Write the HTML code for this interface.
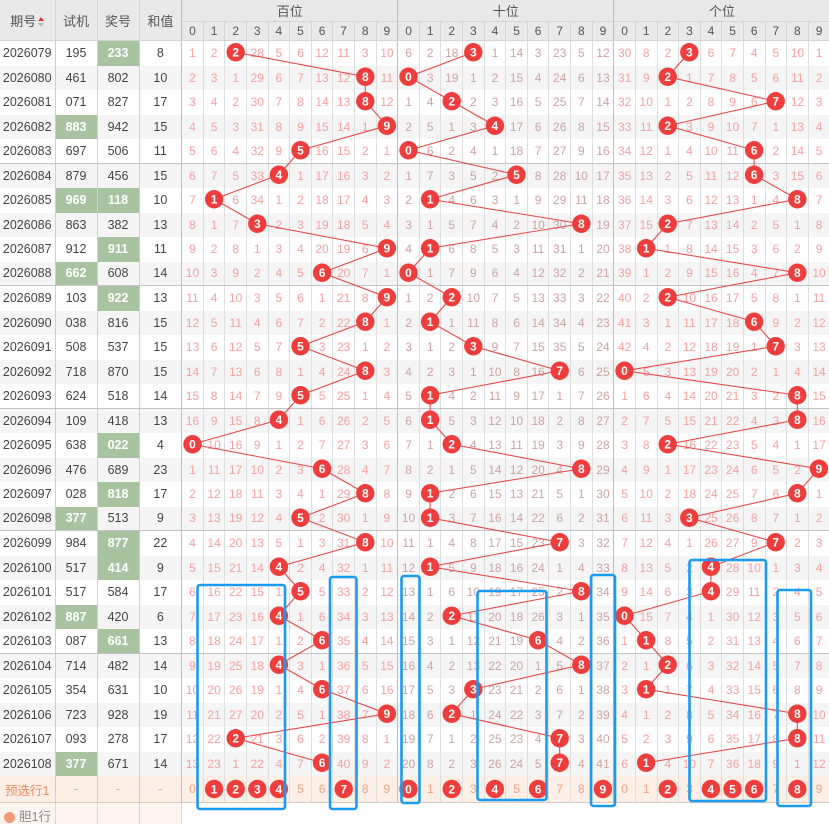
<!DOCTYPE html>
<html><head><meta charset="utf-8">
<style>
html,body{margin:0;padding:0;background:#fff;overflow:hidden;width:829px;height:824px}
body{position:relative;font-family:"Liberation Sans","Noto Sans CJK SC",sans-serif}
table{border-collapse:collapse;table-layout:fixed;width:829.7px;position:absolute;left:0;top:0}
td,th{padding:0;text-align:center;overflow:hidden;white-space:nowrap;font-weight:normal}
th{background:#e9e9e9;color:#555;font-size:13px;border-right:1px solid #d4d4d4;border-bottom:1px solid #d4d4d4}
tr.h1 th{height:21px}
tr.h2 th{height:18px;font-size:12px}
tbody tr{height:24.5px}
tbody td{height:24.5px;font-size:12px;border-right:1px solid #dedede}
tbody tr.s{height:23.5px}
tbody tr.s td{height:23.5px}
tbody tr:nth-child(even) td{background:#f5f5f5}
tbody td:nth-child(-n+4){color:#444;font-size:12.5px;border-right:1px solid #cfcfcf}
tbody td:nth-child(n+5){color:#f7a0a0}
tbody td:nth-child(n+15):nth-child(-n+24){color:#cfa2a2}
tbody td:nth-child(4),tbody td:nth-child(14),tbody td:nth-child(24){border-right:1px solid #bdbdbd}
th.gb{border-right:1px solid #bdbdbd}
tr.s td{border-bottom:1px solid #c4c4c4}
td.gr{background:#a7c3a0 !important;color:#fff !important;font-weight:bold}
tr.p td{height:26px;background:#fdeee6 !important;color:#f2a27e !important;border-bottom:1px solid #d8c8c0}
tr.p td:first-child{color:#f08a5d !important;font-size:12.5px}
tr.x td{height:22px;background:#fff !important;border-right:none}
tr.x td:nth-child(-n+4){background:#fdf4ef !important;border-right:1px solid #d8d8d8}
.ar{display:inline-block;vertical-align:middle;margin-left:2px;width:6px;height:10px;position:relative}
.ar:before{content:"";position:absolute;left:0;top:0;border:3px solid transparent;border-bottom:4px solid #e33;border-top:0}
.ar:after{content:"";position:absolute;left:0;top:6px;border:3px solid transparent;border-top:4px solid #bbb;border-bottom:0}
svg{position:absolute;left:0;top:0}
.bt{fill:#fff;font-size:12px;font-weight:bold;font-family:"Liberation Sans",sans-serif;text-anchor:middle}
</style></head><body>
<table>
<colgroup><col style="width:55px"><col style="width:42px"><col style="width:42px"><col style="width:42.7px">
<col span="30" style="width:21.6px"></colgroup>
<thead>
<tr class="h1"><th rowspan="2">期号<span class="ar"></span></th><th rowspan="2">试机</th><th rowspan="2">奖号</th><th rowspan="2" class="gb">和值</th><th colspan="10" class="gb">百位</th><th colspan="10" class="gb">十位</th><th colspan="10">个位</th></tr>
<tr class="h2"><th>0</th><th>1</th><th>2</th><th>3</th><th>4</th><th>5</th><th>6</th><th>7</th><th>8</th><th class="gb">9</th><th>0</th><th>1</th><th>2</th><th>3</th><th>4</th><th>5</th><th>6</th><th>7</th><th>8</th><th class="gb">9</th><th>0</th><th>1</th><th>2</th><th>3</th><th>4</th><th>5</th><th>6</th><th>7</th><th>8</th><th>9</th></tr>
</thead>
<tbody>
<tr><td>2026079<td>195<td class="gr">233<td>8<td>1<td>2<td><td>28<td>5<td>6<td>12<td>11<td>3<td>10<td>6<td>2<td>18<td><td>1<td>14<td>3<td>23<td>5<td>12<td>30<td>8<td>2<td><td>6<td>7<td>4<td>5<td>10<td>1</tr>
<tr><td>2026080<td>461<td>802<td>10<td>2<td>3<td>1<td>29<td>6<td>7<td>13<td>12<td><td>11<td><td>3<td>19<td>1<td>2<td>15<td>4<td>24<td>6<td>13<td>31<td>9<td><td>1<td>7<td>8<td>5<td>6<td>11<td>2</tr>
<tr><td>2026081<td>071<td>827<td>17<td>3<td>4<td>2<td>30<td>7<td>8<td>14<td>13<td><td>12<td>1<td>4<td><td>2<td>3<td>16<td>5<td>25<td>7<td>14<td>32<td>10<td>1<td>2<td>8<td>9<td>6<td><td>12<td>3</tr>
<tr><td>2026082<td class="gr">883<td>942<td>15<td>4<td>5<td>3<td>31<td>8<td>9<td>15<td>14<td>1<td><td>2<td>5<td>1<td>3<td><td>17<td>6<td>26<td>8<td>15<td>33<td>11<td><td>3<td>9<td>10<td>7<td>1<td>13<td>4</tr>
<tr class="s"><td>2026083<td>697<td>506<td>11<td>5<td>6<td>4<td>32<td>9<td><td>16<td>15<td>2<td>1<td><td>6<td>2<td>4<td>1<td>18<td>7<td>27<td>9<td>16<td>34<td>12<td>1<td>4<td>10<td>11<td><td>2<td>14<td>5</tr>
<tr><td>2026084<td>879<td>456<td>15<td>6<td>7<td>5<td>33<td><td>1<td>17<td>16<td>3<td>2<td>1<td>7<td>3<td>5<td>2<td><td>8<td>28<td>10<td>17<td>35<td>13<td>2<td>5<td>11<td>12<td><td>3<td>15<td>6</tr>
<tr><td>2026085<td class="gr">969<td class="gr">118<td>10<td>7<td><td>6<td>34<td>1<td>2<td>18<td>17<td>4<td>3<td>2<td><td>4<td>6<td>3<td>1<td>9<td>29<td>11<td>18<td>36<td>14<td>3<td>6<td>12<td>13<td>1<td>4<td><td>7</tr>
<tr><td>2026086<td>863<td>382<td>13<td>8<td>1<td>7<td><td>2<td>3<td>19<td>18<td>5<td>4<td>3<td>1<td>5<td>7<td>4<td>2<td>10<td>30<td><td>19<td>37<td>15<td><td>7<td>13<td>14<td>2<td>5<td>1<td>8</tr>
<tr><td>2026087<td>912<td class="gr">911<td>11<td>9<td>2<td>8<td>1<td>3<td>4<td>20<td>19<td>6<td><td>4<td><td>6<td>8<td>5<td>3<td>11<td>31<td>1<td>20<td>38<td><td>1<td>8<td>14<td>15<td>3<td>6<td>2<td>9</tr>
<tr class="s"><td>2026088<td class="gr">662<td>608<td>14<td>10<td>3<td>9<td>2<td>4<td>5<td><td>20<td>7<td>1<td><td>1<td>7<td>9<td>6<td>4<td>12<td>32<td>2<td>21<td>39<td>1<td>2<td>9<td>15<td>16<td>4<td>7<td><td>10</tr>
<tr><td>2026089<td>103<td class="gr">922<td>13<td>11<td>4<td>10<td>3<td>5<td>6<td>1<td>21<td>8<td><td>1<td>2<td><td>10<td>7<td>5<td>13<td>33<td>3<td>22<td>40<td>2<td><td>10<td>16<td>17<td>5<td>8<td>1<td>11</tr>
<tr><td>2026090<td>038<td>816<td>15<td>12<td>5<td>11<td>4<td>6<td>7<td>2<td>22<td><td>1<td>2<td><td>1<td>11<td>8<td>6<td>14<td>34<td>4<td>23<td>41<td>3<td>1<td>11<td>17<td>18<td><td>9<td>2<td>12</tr>
<tr><td>2026091<td>508<td>537<td>15<td>13<td>6<td>12<td>5<td>7<td><td>3<td>23<td>1<td>2<td>3<td>1<td>2<td><td>9<td>7<td>15<td>35<td>5<td>24<td>42<td>4<td>2<td>12<td>18<td>19<td>1<td><td>3<td>13</tr>
<tr><td>2026092<td>718<td>870<td>15<td>14<td>7<td>13<td>6<td>8<td>1<td>4<td>24<td><td>3<td>4<td>2<td>3<td>1<td>10<td>8<td>16<td><td>6<td>25<td><td>5<td>3<td>13<td>19<td>20<td>2<td>1<td>4<td>14</tr>
<tr class="s"><td>2026093<td>624<td>518<td>14<td>15<td>8<td>14<td>7<td>9<td><td>5<td>25<td>1<td>4<td>5<td><td>4<td>2<td>11<td>9<td>17<td>1<td>7<td>26<td>1<td>6<td>4<td>14<td>20<td>21<td>3<td>2<td><td>15</tr>
<tr><td>2026094<td>109<td>418<td>13<td>16<td>9<td>15<td>8<td><td>1<td>6<td>26<td>2<td>5<td>6<td><td>5<td>3<td>12<td>10<td>18<td>2<td>8<td>27<td>2<td>7<td>5<td>15<td>21<td>22<td>4<td>3<td><td>16</tr>
<tr><td>2026095<td>638<td class="gr">022<td>4<td><td>10<td>16<td>9<td>1<td>2<td>7<td>27<td>3<td>6<td>7<td>1<td><td>4<td>13<td>11<td>19<td>3<td>9<td>28<td>3<td>8<td><td>16<td>22<td>23<td>5<td>4<td>1<td>17</tr>
<tr><td>2026096<td>476<td>689<td>23<td>1<td>11<td>17<td>10<td>2<td>3<td><td>28<td>4<td>7<td>8<td>2<td>1<td>5<td>14<td>12<td>20<td>4<td><td>29<td>4<td>9<td>1<td>17<td>23<td>24<td>6<td>5<td>2<td></tr>
<tr><td>2026097<td>028<td class="gr">818<td>17<td>2<td>12<td>18<td>11<td>3<td>4<td>1<td>29<td><td>8<td>9<td><td>2<td>6<td>15<td>13<td>21<td>5<td>1<td>30<td>5<td>10<td>2<td>18<td>24<td>25<td>7<td>6<td><td>1</tr>
<tr class="s"><td>2026098<td class="gr">377<td>513<td>9<td>3<td>13<td>19<td>12<td>4<td><td>2<td>30<td>1<td>9<td>10<td><td>3<td>7<td>16<td>14<td>22<td>6<td>2<td>31<td>6<td>11<td>3<td><td>25<td>26<td>8<td>7<td>1<td>2</tr>
<tr><td>2026099<td>984<td class="gr">877<td>22<td>4<td>14<td>20<td>13<td>5<td>1<td>3<td>31<td><td>10<td>11<td>1<td>4<td>8<td>17<td>15<td>23<td><td>3<td>32<td>7<td>12<td>4<td>1<td>26<td>27<td>9<td><td>2<td>3</tr>
<tr><td>2026100<td>517<td class="gr">414<td>9<td>5<td>15<td>21<td>14<td><td>2<td>4<td>32<td>1<td>11<td>12<td><td>5<td>9<td>18<td>16<td>24<td>1<td>4<td>33<td>8<td>13<td>5<td>2<td><td>28<td>10<td>1<td>3<td>4</tr>
<tr><td>2026101<td>517<td>584<td>17<td>6<td>16<td>22<td>15<td>1<td><td>5<td>33<td>2<td>12<td>13<td>1<td>6<td>10<td>19<td>17<td>25<td>2<td><td>34<td>9<td>14<td>6<td>3<td><td>29<td>11<td>2<td>4<td>5</tr>
<tr><td>2026102<td class="gr">887<td>420<td>6<td>7<td>17<td>23<td>16<td><td>1<td>6<td>34<td>3<td>13<td>14<td>2<td><td>11<td>20<td>18<td>26<td>3<td>1<td>35<td><td>15<td>7<td>4<td>1<td>30<td>12<td>3<td>5<td>6</tr>
<tr class="s"><td>2026103<td>087<td class="gr">661<td>13<td>8<td>18<td>24<td>17<td>1<td>2<td><td>35<td>4<td>14<td>15<td>3<td>1<td>12<td>21<td>19<td><td>4<td>2<td>36<td>1<td><td>8<td>5<td>2<td>31<td>13<td>4<td>6<td>7</tr>
<tr><td>2026104<td>714<td>482<td>14<td>9<td>19<td>25<td>18<td><td>3<td>1<td>36<td>5<td>15<td>16<td>4<td>2<td>13<td>22<td>20<td>1<td>5<td><td>37<td>2<td>1<td><td>6<td>3<td>32<td>14<td>5<td>7<td>8</tr>
<tr><td>2026105<td>354<td>631<td>10<td>10<td>20<td>26<td>19<td>1<td>4<td><td>37<td>6<td>16<td>17<td>5<td>3<td><td>23<td>21<td>2<td>6<td>1<td>38<td>3<td><td>1<td>7<td>4<td>33<td>15<td>6<td>8<td>9</tr>
<tr><td>2026106<td>723<td>928<td>19<td>11<td>21<td>27<td>20<td>2<td>5<td>1<td>38<td>7<td><td>18<td>6<td><td>1<td>24<td>22<td>3<td>7<td>2<td>39<td>4<td>1<td>2<td>8<td>5<td>34<td>16<td>7<td><td>10</tr>
<tr><td>2026107<td>093<td>278<td>17<td>12<td>22<td><td>21<td>3<td>6<td>2<td>39<td>8<td>1<td>19<td>7<td>1<td>2<td>25<td>23<td>4<td><td>3<td>40<td>5<td>2<td>3<td>9<td>6<td>35<td>17<td>8<td><td>11</tr>
<tr><td>2026108<td class="gr">377<td>671<td>14<td>13<td>23<td>1<td>22<td>4<td>7<td><td>40<td>9<td>2<td>20<td>8<td>2<td>3<td>26<td>24<td>5<td><td>4<td>41<td>6<td><td>4<td>10<td>7<td>36<td>18<td>9<td>1<td>12</tr>
<tr class="p"><td>预选行1<td>-<td>-<td>-<td>0<td><td><td><td><td>5<td>6<td><td>8<td>9<td><td>1<td><td>3<td><td>5<td><td>7<td>8<td><td>0<td>1<td><td>3<td><td><td><td>7<td><td>9</tr>
<tr class="x"><td style="text-align:left;padding-left:4px;color:#888"><span style="display:inline-block;width:11px;height:11px;border-radius:50%;background:#f29a7a;vertical-align:middle;margin-right:4px"></span>胆1行<td><td><td><td colspan="30"></tr>
</tbody></table>

<svg width="829" height="824" viewBox="0 0 829 824">
<g fill="none" stroke="#e84848" stroke-width="1.1">
<polyline points="235.7,52.25 365.3,76.75 365.3,101.25 386.9,125.75 300.5,150.25 278.9,174.75 214.1,199.25 257.3,223.75 386.9,248.25 322.1,272.75 386.9,297.25 365.3,321.75 300.5,346.25 365.3,370.75 300.5,395.25 278.9,419.75 192.5,444.25 322.1,468.75 365.3,493.25 300.5,517.75 365.3,542.25 278.9,566.75 300.5,591.25 278.9,615.75 322.1,640.25 278.9,664.75 322.1,689.25 386.9,713.75 235.7,738.25 322.1,762.75"/>
<polyline points="473.3,52.25 408.5,76.75 451.7,101.25 494.9,125.75 408.5,150.25 516.5,174.75 430.1,199.25 581.3,223.75 430.1,248.25 408.5,272.75 451.7,297.25 430.1,321.75 473.3,346.25 559.7,370.75 430.1,395.25 430.1,419.75 451.7,444.25 581.3,468.75 430.1,493.25 430.1,517.75 559.7,542.25 430.1,566.75 581.3,591.25 451.7,615.75 538.1,640.25 581.3,664.75 473.3,689.25 451.7,713.75 559.7,738.25 559.7,762.75"/>
<polyline points="689.3,52.25 667.7,76.75 775.7,101.25 667.7,125.75 754.1,150.25 754.1,174.75 797.3,199.25 667.7,223.75 646.1,248.25 797.3,272.75 667.7,297.25 754.1,321.75 775.7,346.25 624.5,370.75 797.3,395.25 797.3,419.75 667.7,444.25 818.9,468.75 797.3,493.25 689.3,517.75 775.7,542.25 710.9,566.75 710.9,591.25 624.5,615.75 646.1,640.25 667.7,664.75 646.1,689.25 797.3,713.75 797.3,738.25 646.1,762.75"/>
</g>
<g fill="#ef3d3d">
<circle cx="235.7" cy="52.25" r="9.2"/><circle cx="365.3" cy="76.75" r="9.2"/><circle cx="365.3" cy="101.25" r="9.2"/><circle cx="386.9" cy="125.75" r="9.2"/><circle cx="300.5" cy="150.25" r="9.2"/><circle cx="278.9" cy="174.75" r="9.2"/><circle cx="214.1" cy="199.25" r="9.2"/><circle cx="257.3" cy="223.75" r="9.2"/><circle cx="386.9" cy="248.25" r="9.2"/><circle cx="322.1" cy="272.75" r="9.2"/><circle cx="386.9" cy="297.25" r="9.2"/><circle cx="365.3" cy="321.75" r="9.2"/><circle cx="300.5" cy="346.25" r="9.2"/><circle cx="365.3" cy="370.75" r="9.2"/><circle cx="300.5" cy="395.25" r="9.2"/><circle cx="278.9" cy="419.75" r="9.2"/><circle cx="192.5" cy="444.25" r="9.2"/><circle cx="322.1" cy="468.75" r="9.2"/><circle cx="365.3" cy="493.25" r="9.2"/><circle cx="300.5" cy="517.75" r="9.2"/><circle cx="365.3" cy="542.25" r="9.2"/><circle cx="278.9" cy="566.75" r="9.2"/><circle cx="300.5" cy="591.25" r="9.2"/><circle cx="278.9" cy="615.75" r="9.2"/><circle cx="322.1" cy="640.25" r="9.2"/><circle cx="278.9" cy="664.75" r="9.2"/><circle cx="322.1" cy="689.25" r="9.2"/><circle cx="386.9" cy="713.75" r="9.2"/><circle cx="235.7" cy="738.25" r="9.2"/><circle cx="322.1" cy="762.75" r="9.2"/>
<circle cx="473.3" cy="52.25" r="9.2"/><circle cx="408.5" cy="76.75" r="9.2"/><circle cx="451.7" cy="101.25" r="9.2"/><circle cx="494.9" cy="125.75" r="9.2"/><circle cx="408.5" cy="150.25" r="9.2"/><circle cx="516.5" cy="174.75" r="9.2"/><circle cx="430.1" cy="199.25" r="9.2"/><circle cx="581.3" cy="223.75" r="9.2"/><circle cx="430.1" cy="248.25" r="9.2"/><circle cx="408.5" cy="272.75" r="9.2"/><circle cx="451.7" cy="297.25" r="9.2"/><circle cx="430.1" cy="321.75" r="9.2"/><circle cx="473.3" cy="346.25" r="9.2"/><circle cx="559.7" cy="370.75" r="9.2"/><circle cx="430.1" cy="395.25" r="9.2"/><circle cx="430.1" cy="419.75" r="9.2"/><circle cx="451.7" cy="444.25" r="9.2"/><circle cx="581.3" cy="468.75" r="9.2"/><circle cx="430.1" cy="493.25" r="9.2"/><circle cx="430.1" cy="517.75" r="9.2"/><circle cx="559.7" cy="542.25" r="9.2"/><circle cx="430.1" cy="566.75" r="9.2"/><circle cx="581.3" cy="591.25" r="9.2"/><circle cx="451.7" cy="615.75" r="9.2"/><circle cx="538.1" cy="640.25" r="9.2"/><circle cx="581.3" cy="664.75" r="9.2"/><circle cx="473.3" cy="689.25" r="9.2"/><circle cx="451.7" cy="713.75" r="9.2"/><circle cx="559.7" cy="738.25" r="9.2"/><circle cx="559.7" cy="762.75" r="9.2"/>
<circle cx="689.3" cy="52.25" r="9.2"/><circle cx="667.7" cy="76.75" r="9.2"/><circle cx="775.7" cy="101.25" r="9.2"/><circle cx="667.7" cy="125.75" r="9.2"/><circle cx="754.1" cy="150.25" r="9.2"/><circle cx="754.1" cy="174.75" r="9.2"/><circle cx="797.3" cy="199.25" r="9.2"/><circle cx="667.7" cy="223.75" r="9.2"/><circle cx="646.1" cy="248.25" r="9.2"/><circle cx="797.3" cy="272.75" r="9.2"/><circle cx="667.7" cy="297.25" r="9.2"/><circle cx="754.1" cy="321.75" r="9.2"/><circle cx="775.7" cy="346.25" r="9.2"/><circle cx="624.5" cy="370.75" r="9.2"/><circle cx="797.3" cy="395.25" r="9.2"/><circle cx="797.3" cy="419.75" r="9.2"/><circle cx="667.7" cy="444.25" r="9.2"/><circle cx="818.9" cy="468.75" r="9.2"/><circle cx="797.3" cy="493.25" r="9.2"/><circle cx="689.3" cy="517.75" r="9.2"/><circle cx="775.7" cy="542.25" r="9.2"/><circle cx="710.9" cy="566.75" r="9.2"/><circle cx="710.9" cy="591.25" r="9.2"/><circle cx="624.5" cy="615.75" r="9.2"/><circle cx="646.1" cy="640.25" r="9.2"/><circle cx="667.7" cy="664.75" r="9.2"/><circle cx="646.1" cy="689.25" r="9.2"/><circle cx="797.3" cy="713.75" r="9.2"/><circle cx="797.3" cy="738.25" r="9.2"/><circle cx="646.1" cy="762.75" r="9.2"/>
<circle cx="214.1" cy="789" r="9.2"/><circle cx="235.7" cy="789" r="9.2"/><circle cx="257.3" cy="789" r="9.2"/><circle cx="278.9" cy="789" r="9.2"/><circle cx="343.7" cy="789" r="9.2"/>
<circle cx="408.5" cy="789" r="9.2"/><circle cx="451.7" cy="789" r="9.2"/><circle cx="494.9" cy="789" r="9.2"/><circle cx="538.1" cy="789" r="9.2"/><circle cx="602.9" cy="789" r="9.2"/>
<circle cx="667.7" cy="789" r="9.2"/><circle cx="710.9" cy="789" r="9.2"/><circle cx="732.5" cy="789" r="9.2"/><circle cx="754.1" cy="789" r="9.2"/><circle cx="797.3" cy="789" r="9.2"/>
</g>
<g class="bt">
<text x="235.7" y="56.5">2</text><text x="365.3" y="81">8</text><text x="365.3" y="105.5">8</text><text x="386.9" y="130">9</text><text x="300.5" y="154.5">5</text><text x="278.9" y="179">4</text><text x="214.1" y="203.5">1</text><text x="257.3" y="228">3</text><text x="386.9" y="252.5">9</text><text x="322.1" y="277">6</text><text x="386.9" y="301.5">9</text><text x="365.3" y="326">8</text><text x="300.5" y="350.5">5</text><text x="365.3" y="375">8</text><text x="300.5" y="399.5">5</text><text x="278.9" y="424">4</text><text x="192.5" y="448.5">0</text><text x="322.1" y="473">6</text><text x="365.3" y="497.5">8</text><text x="300.5" y="522">5</text><text x="365.3" y="546.5">8</text><text x="278.9" y="571">4</text><text x="300.5" y="595.5">5</text><text x="278.9" y="620">4</text><text x="322.1" y="644.5">6</text><text x="278.9" y="669">4</text><text x="322.1" y="693.5">6</text><text x="386.9" y="718">9</text><text x="235.7" y="742.5">2</text><text x="322.1" y="767">6</text>
<text x="473.3" y="56.5">3</text><text x="408.5" y="81">0</text><text x="451.7" y="105.5">2</text><text x="494.9" y="130">4</text><text x="408.5" y="154.5">0</text><text x="516.5" y="179">5</text><text x="430.1" y="203.5">1</text><text x="581.3" y="228">8</text><text x="430.1" y="252.5">1</text><text x="408.5" y="277">0</text><text x="451.7" y="301.5">2</text><text x="430.1" y="326">1</text><text x="473.3" y="350.5">3</text><text x="559.7" y="375">7</text><text x="430.1" y="399.5">1</text><text x="430.1" y="424">1</text><text x="451.7" y="448.5">2</text><text x="581.3" y="473">8</text><text x="430.1" y="497.5">1</text><text x="430.1" y="522">1</text><text x="559.7" y="546.5">7</text><text x="430.1" y="571">1</text><text x="581.3" y="595.5">8</text><text x="451.7" y="620">2</text><text x="538.1" y="644.5">6</text><text x="581.3" y="669">8</text><text x="473.3" y="693.5">3</text><text x="451.7" y="718">2</text><text x="559.7" y="742.5">7</text><text x="559.7" y="767">7</text>
<text x="689.3" y="56.5">3</text><text x="667.7" y="81">2</text><text x="775.7" y="105.5">7</text><text x="667.7" y="130">2</text><text x="754.1" y="154.5">6</text><text x="754.1" y="179">6</text><text x="797.3" y="203.5">8</text><text x="667.7" y="228">2</text><text x="646.1" y="252.5">1</text><text x="797.3" y="277">8</text><text x="667.7" y="301.5">2</text><text x="754.1" y="326">6</text><text x="775.7" y="350.5">7</text><text x="624.5" y="375">0</text><text x="797.3" y="399.5">8</text><text x="797.3" y="424">8</text><text x="667.7" y="448.5">2</text><text x="818.9" y="473">9</text><text x="797.3" y="497.5">8</text><text x="689.3" y="522">3</text><text x="775.7" y="546.5">7</text><text x="710.9" y="571">4</text><text x="710.9" y="595.5">4</text><text x="624.5" y="620">0</text><text x="646.1" y="644.5">1</text><text x="667.7" y="669">2</text><text x="646.1" y="693.5">1</text><text x="797.3" y="718">8</text><text x="797.3" y="742.5">8</text><text x="646.1" y="767">1</text>
<text x="214.1" y="793.3">1</text><text x="235.7" y="793.3">2</text><text x="257.3" y="793.3">3</text><text x="278.9" y="793.3">4</text><text x="343.7" y="793.3">7</text>
<text x="408.5" y="793.3">0</text><text x="451.7" y="793.3">2</text><text x="494.9" y="793.3">4</text><text x="538.1" y="793.3">6</text><text x="602.9" y="793.3">9</text>
<text x="667.7" y="793.3">2</text><text x="710.9" y="793.3">4</text><text x="732.5" y="793.3">5</text><text x="754.1" y="793.3">6</text><text x="797.3" y="793.3">8</text>
</g>
<g fill="none" stroke="#1b9bf0" stroke-width="2.6">
<rect x="197.5" y="585" width="87.5" height="224" rx="2.5"/>
<rect x="330" y="577" width="26.5" height="232" rx="2.5"/>
<rect x="401.5" y="576" width="18" height="227" rx="2.5"/>
<rect x="477.5" y="591" width="69" height="209" rx="2.5"/>
<rect x="591" y="575" width="24" height="231" rx="2.5"/>
<rect x="689.5" y="560" width="76.5" height="241" rx="2.5"/>
<rect x="777.5" y="590" width="33.5" height="216" rx="2.5"/>
</g>
</svg>
</body></html>
